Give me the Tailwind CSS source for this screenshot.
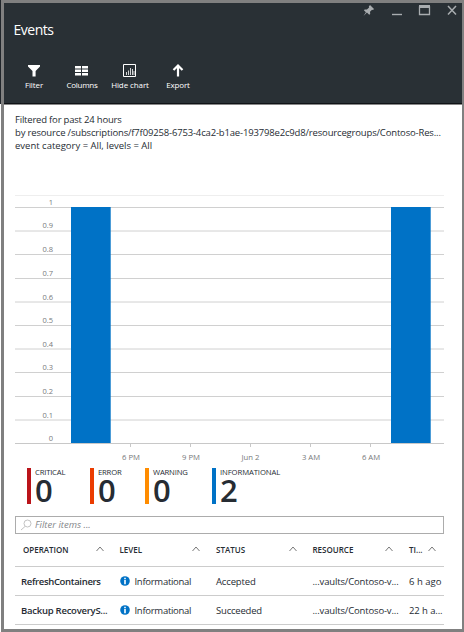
<!DOCTYPE html>
<html lang="en">
<head>
<meta charset="utf-8">
<title>Events</title>
<script src="https://cdn.jsdelivr.net/npm/@tailwindcss/browser@4"></script>
</head>
<body class="w-[464px] h-[632px] overflow-hidden bg-white font-['Open_Sans','Noto_Sans',sans-serif] text-[#262c33]">
<div class="w-[464px] h-[632px] pl-px bg-linear-to-b from-[#20252a] from-[104px] to-white to-[104px]">
<div class="w-[463px] h-[632px] border-[3px] border-r-2 border-[#808080] flex flex-col bg-white overflow-hidden">
  <header class="h-[102px] shrink-0 bg-[#293035] border-b border-b-[#888] text-white shadow-[inset_0_-1px_0_#101316]">
    <div class="h-[16px] flex justify-end items-start">
      <svg class="w-[100px] h-[17px]" viewBox="362 3 100 17" fill="none" stroke="#a9adb0">
        <path d="M370 5l4 4-1 1-1-.3-2 2.100.2 2.200-1 .7-2.300-2.300L363.500 16l2.400-3.700-2-2 .8-.9 2.200.2 2.200-2-.3-1z" fill="#a9adb0" stroke="none"/>
        <path d="M392 14.500h10" stroke-width="1.400"/>
        <path d="M419 6.500h11" stroke-width="3"/><path d="M419.500 7h10v7.500h-10z" stroke-width="1.300"/>
        <path d="M448 6l8 8.500M456 6l-8 8.500" stroke-width="1.500"/>
      </svg>
    </div>
    <h1 class="pl-[9.500px] h-[22px] leading-[22px] text-[14px] tracking-[-0.5px]">Events</h1>
    <nav class="pl-[6px] pt-[21px] flex text-[8px] leading-[12px] tracking-[-0.1px]">
      <div class="w-12 flex flex-col items-center gap-[1px]">
        <svg class="size-4" viewBox="0 0 16 16" fill="#fff"><path d="M2 3h12v1.500L9.600 9v5.500H6.500V9L2 4.500z"/></svg>
        <span>Filter</span>
      </div>
      <div class="w-12 flex flex-col items-center gap-[1px]">
        <svg class="size-4" viewBox="0 0 16 16" fill="#fff"><path d="M1 4h6v2.500H1zM8 4h6v2.500H8zM1 7.500h6V10H1zM8 7.500h6V10H8zM1 11h6v2.500H1zM8 11h6v2.500H8z"/></svg>
        <span class="tracking-[-0.25px]">Columns</span>
      </div>
      <div class="w-12 flex flex-col items-center gap-[1px]">
        <svg class="size-4" viewBox="0 0 16 16" fill="none" stroke="#fff"><path d="M1.500 2.500h12v12h-12z"/><path d="M4.500 13v-3M6.500 13V8.500M8.500 13V6M10.500 13V7M12 13V9" stroke-width=".8"/></svg>
        <span class="whitespace-nowrap">Hide chart</span>
      </div>
      <div class="w-12 flex flex-col items-center gap-[1px]">
        <svg class="size-4" viewBox="0 0 16 16" fill="none" stroke="#fff" stroke-width="2.200"><path d="M8 14.500V4M3.500 8L8 3.500 12.500 8"/></svg>
        <span class="tracking-[-0.2px]">Export</span>
      </div>
    </nav>
  </header>

  <main class="flex flex-col pl-[11px] pr-[17px]">
    <div class="h-[80px] pt-[8px] text-[9.500px] leading-[13px] whitespace-nowrap">
      <p class="tracking-[-0.2px]">Filtered for past 24 hours</p>
      <p class="tracking-[-0.163px]">by resource /subscriptions/f7f09258-6753-4ca2-b1ae-193798e2c9d8/resourcegroups/Contoso-Res...</p>
      <p>event category = All, levels = All</p>
    </div>

    <svg class="w-[430px] h-[280px]" viewBox="15 185 430 280">
      <path d="M15 195.500h429" stroke="#eee"/>
      <path d="M15 207.500h429M15 231h429M15 254.500h429M15 278.500h429M15 302h429M15 325.500h429M15 349h429M15 372.500h429M15 396.500h429M15 420h429" stroke="#d0d0d0"/>
      <path d="M15 443.500h429M130.500 444v3M190.500 444v3M250.500 444v3M310.500 444v3M370.500 444v3" stroke="#c8c8c8"/>
      <path d="M71 207h39.700v236H71zM391 207h39.700v236H391z" fill="#0072c6"/>
      <g class="text-[7.500px]" fill="#77797b" text-anchor="end">
        <text x="53" y="205">1</text><text x="53" y="228">0.9</text><text x="53" y="252">0.8</text><text x="53" y="275.500">0.7</text><text x="53" y="299.500">0.6</text><text x="53" y="323">0.5</text><text x="53" y="347">0.4</text><text x="53" y="370">0.3</text><text x="53" y="394">0.2</text><text x="53" y="417.500">0.1</text><text x="53" y="441">0</text>
      </g>
      <g class="text-[7.700px]" fill="#77797b" text-anchor="middle">
        <text x="131" y="460">6 PM</text><text x="191" y="460">9 PM</text><text x="250.500" y="460">Jun 2</text><text x="311" y="460">3 AM</text><text x="371" y="460">6 AM</text>
      </g>
    </svg>

    <section class="h-[51px] pt-[3px] pl-3 flex text-[7.700px] tracking-[-0.2px]">
      <div class="w-[63px] h-9 border-l-4 border-[#ba141a] pl-[4px]"><div class="h-2 leading-[8px]">CRITICAL</div><div class="h-7 leading-[29px] text-[31px] tracking-normal font-semibold">0</div></div>
      <div class="w-[55px] h-9 border-l-4 border-[#eb3c00] pl-[4px]"><div class="h-2 leading-[8px]">ERROR</div><div class="h-7 leading-[29px] text-[31px] tracking-normal font-semibold">0</div></div>
      <div class="w-[67px] h-9 border-l-4 border-[#ff8c00] pl-[4px]"><div class="h-2 leading-[8px]">WARNING</div><div class="h-7 leading-[29px] text-[31px] tracking-normal font-semibold">0</div></div>
      <div class="w-[80px] h-9 border-l-4 border-[#0072c6] pl-[4px]"><div class="h-2 leading-[8px] tracking-[-0.1px]">INFORMATIONAL</div><div class="h-7 leading-[29px] text-[31px] tracking-normal font-semibold">2</div></div>
    </section>

    <div class="w-[429px] h-[18px] border border-[#acacac] flex items-center pl-1 gap-[3px]">
      <svg class="w-3 h-3" viewBox="0 0 12 12" fill="none" stroke="#b4b4b4" stroke-width=".8"><circle cx="7.500" cy="4.500" r="3.500"/><path d="M5 7.500L1 11"/></svg>
      <span class="italic text-[9.500px] text-[#85888b]">Filter items ...</span>
    </div>

    <div class="w-[429px] grid grid-cols-[96.500px_96.500px_96.500px_96.500px_43px] whitespace-nowrap">
      <div class="col-span-5 grid grid-cols-subgrid h-[33px] items-center border-b border-[#ccc] text-[8px] font-semibold">
        <div class="flex justify-between items-center pl-2 pr-2"><span>OPERATION</span><svg class="w-2 h-2 -mt-0.5" viewBox="0 0 8 8" fill="none" stroke="#777"><path d="M.5 6L4 2l3.500 4"/></svg></div>
        <div class="flex justify-between items-center pl-2 pr-2"><span>LEVEL</span><svg class="w-2 h-2 -mt-0.5" viewBox="0 0 8 8" fill="none" stroke="#777"><path d="M.5 6L4 2l3.500 4"/></svg></div>
        <div class="flex justify-between items-center pl-2 pr-2"><span>STATUS</span><svg class="w-2 h-2 -mt-0.5" viewBox="0 0 8 8" fill="none" stroke="#777"><path d="M.5 6L4 2l3.500 4"/></svg></div>
        <div class="flex justify-between items-center pl-2 pr-2"><span>RESOURCE</span><svg class="w-2 h-2 -mt-0.5" viewBox="0 0 8 8" fill="none" stroke="#777"><path d="M.5 6L4 2l3.500 4"/></svg></div>
        <div class="flex justify-between items-center pl-2 pr-2"><span>TI...</span><svg class="w-2 h-2 -mt-0.5" viewBox="0 0 8 8" fill="none" stroke="#777"><path d="M.5 6L4 2l3.500 4"/></svg></div>
      </div>
      <div class="col-span-5 grid grid-cols-subgrid h-[29px] items-center pt-[2px] border-b border-[#ccc] text-[9.500px]">
        <div class="pl-[6px] font-semibold tracking-[-0.33px]">RefreshContainers</div>
        <div class="pl-2 flex items-center gap-[5px] tracking-[-0.28px]"><svg class="size-[10px] -mt-[2px]" viewBox="0 0 10 10"><circle cx="5" cy="5" r="4.800" fill="#0072c6"/><path d="M4.200 1.800h1.600v1.400H4.200zM4.200 4h1.600v4.200H4.200z" fill="#fff"/></svg><span>Informational</span></div>
        <div class="pl-2 tracking-[-0.15px]">Accepted</div>
        <div class="pl-2 tracking-[-0.15px]">...vaults/Contoso-v...</div>
        <div class="pl-2">6 h ago</div>
      </div>
      <div class="col-span-5 grid grid-cols-subgrid h-[29px] items-center pt-[2px] border-b border-[#ccc] text-[9.500px]">
        <div class="pl-[6px] font-semibold tracking-[-0.25px]">Backup RecoveryS...</div>
        <div class="pl-2 flex items-center gap-[5px] tracking-[-0.28px]"><svg class="size-[10px] -mt-[2px]" viewBox="0 0 10 10"><circle cx="5" cy="5" r="4.800" fill="#0072c6"/><path d="M4.200 1.800h1.600v1.400H4.200zM4.200 4h1.600v4.200H4.200z" fill="#fff"/></svg><span>Informational</span></div>
        <div class="pl-2 tracking-[-0.2px]">Succeeded</div>
        <div class="pl-2 tracking-[-0.15px]">...vaults/Contoso-v...</div>
        <div class="pl-2 tracking-[-0.1px]">22 h a...</div>
      </div>
    </div>
  </main>
</div>
</div>
</body>
</html>
